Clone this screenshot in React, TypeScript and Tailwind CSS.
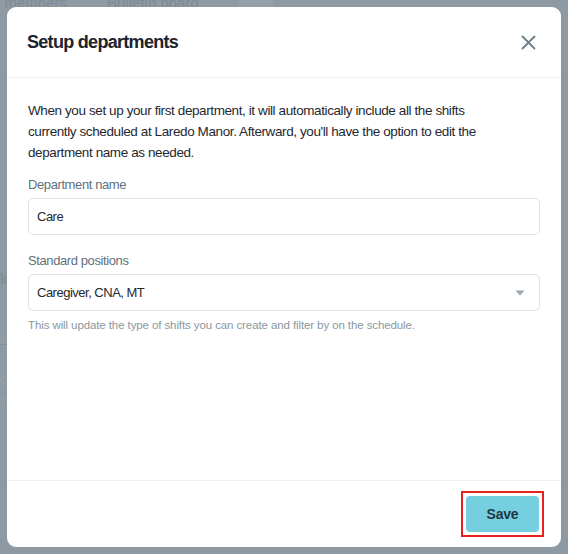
import React from "react";

function CloseIcon() {
  return (
    <svg width="15" height="15" viewBox="0 0 15 15" fill="none">
      <path d="M1.5 1.5L13.5 13.5M13.5 1.5L1.5 13.5" stroke="#6b7e8a" strokeWidth="1.8" strokeLinecap="round" />
    </svg>
  );
}

function CaretDown() {
  return (
    <svg width="10" height="6" viewBox="0 0 10 6" fill="none">
      <path d="M0.5 0.5H9.5L5 5.5Z" fill="#9aa6ae" />
    </svg>
  );
}

export default function App() {
  return (
    <div
      className="relative h-[554px] w-full overflow-hidden bg-[#8e9aa3] p-[7px]"
      style={{ fontFamily: "'Liberation Sans', Arial, sans-serif" }}
    >
      {/* faint page content behind the overlay */}
      <div className="absolute left-0 top-[-9px] flex items-center gap-[40px] text-[15px] text-[#7f8b94]">
        <span className="-ml-[8px]">n members</span>
        <span>Bulletin board</span>
        <span className="h-[24px] w-[34px] rounded-full bg-[#95a1a9]" />
      </div>
      <div className="absolute left-0 top-[268px] text-[15px] text-[#7f8b94]">lo</div>
      <div className="absolute left-0 top-[330px] text-[13px] text-[#959fa7]">w</div>
      <div className="absolute left-0 top-[344px] h-px w-[7px] bg-[#838f98]" />
      <div className="absolute left-0 top-[368px] text-[15px] text-[#959fa7]">o</div>
      <div className="absolute left-0 top-[390px] text-[15px] text-[#959fa7]">n</div>

      {/* modal */}
      <div className="relative flex h-full flex-col rounded-[9px] bg-white">
        <div className="flex h-[71px] items-center justify-between border-b border-[#eef0f2] pl-[20px] pr-[21px]">
          <h2 className="text-[18px] font-bold tracking-[-0.7px] text-[#1c242d]">Setup departments</h2>
          <button className="flex h-[24px] w-[24px] items-center justify-center">
            <CloseIcon />
          </button>
        </div>

        <div className="flex-1 px-[21px] pt-[22px]">
          <p className="max-w-[482px] text-[13.5px] leading-[21px] tracking-[-0.4px] text-[#1f2830]">
            When you set up your first department, it will automatically include all the shifts currently scheduled at
            Laredo Manor. Afterward, you'll have the option to edit the department name as needed.
          </p>

          <div className="mt-[12px]">
            <label className="block text-[13px] leading-[20px] tracking-[-0.4px] text-[#5f717d]">Department name</label>
            <div className="mt-[3px] flex h-[37px] items-center rounded-[5px] border border-[#dde2e6] pl-[8px] text-[13px] tracking-[-0.5px] text-[#1f2830]">
              Care
            </div>
          </div>

          <div className="mt-[16px]">
            <label className="block text-[13px] leading-[20px] tracking-[-0.4px] text-[#5f717d]">Standard positions</label>
            <div className="mt-[3px] flex h-[37px] items-center justify-between rounded-[5px] border border-[#dde2e6] pl-[8px] pr-[14px] text-[13px] tracking-[-0.5px] text-[#1f2830]">
              <span>Caregiver, CNA, MT</span>
              <CaretDown />
            </div>
            <p className="mt-[6px] text-[11.5px] leading-[16px] tracking-[-0.1px] text-[#8a979f]">
              This will update the type of shifts you can create and filter by on the schedule.
            </p>
          </div>
        </div>

        <div className="flex h-[67px] items-center justify-end border-t border-[#eef0f2] pr-[17px]">
          <div className="border-2 border-[#e8211b] p-[3px]">
            <button className="block h-[36px] w-[73px] rounded-[4px] bg-[#76cfdf] text-[14px] font-bold tracking-[-0.2px] text-[#1d3644]">
              Save
            </button>
          </div>
        </div>
      </div>
    </div>
  );
}
